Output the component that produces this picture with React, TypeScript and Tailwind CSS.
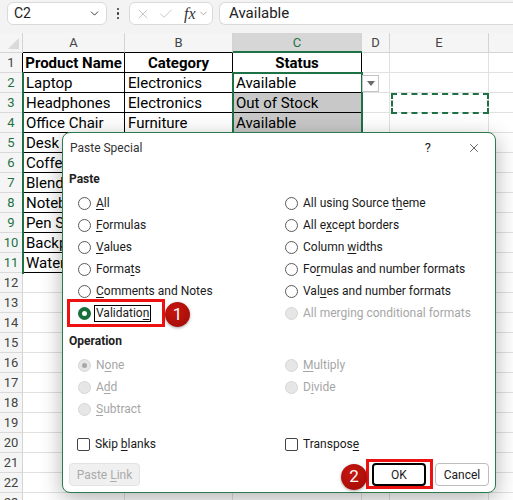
import { Check, ChevronDown, X } from "lucide-react";

const GREEN = "#1e7145";

const LETTERS = ["A", "B", "C", "D", "E", "F"];
const COL_W = ["w-[102px]", "w-[108px]", "w-[129px]", "w-[28px]", "w-[99px]", "w-[60px]"];

const DATA: string[][] = [
  ["Product Name", "Category", "Status"],
  ["Laptop", "Electronics", "Available"],
  ["Headphones", "Electronics", "Out of Stock"],
  ["Office Chair", "Furniture", "Available"],
  ["Desk Lamp", "Furniture", "Available"],
  ["Coffee Maker", "Appliances", "Out of Stock"],
  ["Blender", "Appliances", "Available"],
  ["Notebook", "Stationery", "Available"],
  ["Pen Set", "Stationery", "Out of Stock"],
  ["Backpack", "Accessories", "Available"],
  ["Water Bottle", "Accessories", "Available"],
];

const ROWS = Array.from({ length: 23 }, (_, i) => i + 1);

function FormulaBar() {
  return (
    <div className="h-[33px] bg-[#f3f3f3] flex items-start pt-[2px] font-['Roboto',sans-serif]">
      <div className="ml-[7px] w-[100px] h-[23px] bg-white border border-[#dadada] rounded-[6px] flex items-center pl-[6px] pr-[5px] text-[14px] text-[#222]">
        <span>C2</span>
        <ChevronDown size={13} strokeWidth={1.75} className="ml-auto text-[#333]" />
      </div>
      <div className="w-[22px] h-[23px] flex flex-col items-center justify-center gap-[2px]">
        <span className="w-[2.5px] h-[2.5px] rounded-full bg-[#333]" />
        <span className="w-[2.5px] h-[2.5px] rounded-full bg-[#333]" />
        <span className="w-[2.5px] h-[2.5px] rounded-full bg-[#333]" />
      </div>
      <div className="w-[84px] h-[23px] bg-white border border-[#dadada] rounded-[6px] flex items-center pl-[5px] text-[#b4b4b4]">
        <X size={16} strokeWidth={1.1} />
        <Check size={16} strokeWidth={1.1} className="ml-[7px]" />
        <span className="ml-[10px] font-['Liberation_Serif',serif] italic text-[16px] text-[#333] leading-none">fx</span>
        <ChevronDown size={11} strokeWidth={1.5} className="ml-[2px] text-[#888]" />
      </div>
      <div className="ml-[6px] flex-1 h-[23px] bg-white border border-r-0 border-[#dadada] rounded-l-[6px] flex items-center pl-[9px] text-[15px] text-[#222]">
        Available
      </div>
    </div>
  );
}

function HeaderRow() {
  return (
    <div className="flex h-[20px] bg-[#f5f5f5] text-[13px] text-[#444]">
      <div className="w-[23px] shrink-0 border-r border-b border-[#d4d4d4] relative">
        <svg width="22" height="19" className="absolute left-0 top-0">
          <polygon points="19,5 19,16 8,16" fill="#dadada" />
        </svg>
      </div>
      {LETTERS.map((l, c) => (
        <div
          key={l}
          className={`${COL_W[c]} shrink-0 flex items-center justify-center pt-[1px] border-r border-[#d4d4d4] border-b ${
            c < 2 ? "border-b-black" : "border-b-[#d4d4d4]"
          } ${c === 2 ? "bg-[#d6d6d6] text-[#1e7145]" : ""}`}
        >
          {l}
        </div>
      ))}
    </div>
  );
}

function SheetRow({ r }: { r: number }) {
  const inTable = r <= 11;
  const selRow = r >= 2 && r <= 11;
  return (
    <div className="flex h-[20px]">
      <div
        className={`w-[23px] shrink-0 flex items-center justify-center pt-[1px] bg-[#f5f5f5] text-[13px] border-b border-b-[#d9d9d9] border-r ${
          inTable ? "border-r-black" : "border-r-[#d4d4d4]"
        } ${selRow ? "text-[#1e7145]" : "text-[#444]"}`}
      >
        {r}
      </div>
      {LETTERS.map((l, c) => {
        const table = inTable && c < 3;
        const text = table ? DATA[r - 1][c] : "";
        const grey = c === 2 && r >= 3 && r <= 11;
        return (
          <div
            key={l}
            className={`${COL_W[c]} shrink-0 flex items-center pt-[2px] px-[3px] overflow-hidden whitespace-nowrap text-[15px] text-black border-r border-b ${
              table ? "border-black" : "border-[#e1e1e1]"
            } ${grey ? "bg-[#c8c8c8]" : "bg-white"} ${r === 1 ? "font-bold justify-center" : ""}`}
          >
            {text}
          </div>
        );
      })}
    </div>
  );
}

function Key({ text }: { text: string }) {
  const i = text.indexOf("&");
  if (i < 0) return <span>{text}</span>;
  return (
    <span className="whitespace-pre">
      {text.slice(0, i)}
      <span className="underline underline-offset-[2px]">{text[i + 1]}</span>
      {text.slice(i + 2)}
    </span>
  );
}

type RadioState = "off" | "on" | "disabled" | "disabledOn";

function Radio({ label, state = "off", focus = false }: { label: string; state?: RadioState; focus?: boolean }) {
  const dis = state === "disabled" || state === "disabledOn";
  return (
    <div className={`h-[22px] flex items-center ${dis ? "text-[#a6a6a6]" : "text-[#1a1a1a]"}`}>
      {state === "on" ? (
        <span className="w-[13px] h-[13px] shrink-0 rounded-full border-[4px] border-[#17703c] bg-white" />
      ) : dis ? (
        <span className="w-[13px] h-[13px] shrink-0 rounded-full border border-[#d6d6d6] bg-[#e6e6e6] flex items-center justify-center">
          {state === "disabledOn" && <span className="w-[5px] h-[5px] rounded-full bg-[#a8a8a8]" />}
        </span>
      ) : (
        <span className="w-[13px] h-[13px] shrink-0 rounded-full border border-[#5a5a5a] bg-white" />
      )}
      <span className={`leading-[15px] ${focus ? "ml-[3px] border border-black px-[1px]" : "ml-[5px]"}`}>
        <Key text={label} />
      </span>
    </div>
  );
}

function CheckBox({ label }: { label: string }) {
  return (
    <div className="h-[22px] flex items-center text-[#1a1a1a]">
      <span className="w-[13px] h-[13px] shrink-0 rounded-[2px] border border-[#444] bg-white" />
      <span className="ml-[5px]">
        <Key text={label} />
      </span>
    </div>
  );
}

function PasteSpecialDialog() {
  return (
    <div className="absolute left-[62px] top-[132px] w-[434px] h-[361px] rounded-[8px] border border-[#2a7a4b] bg-white shadow-[0_6px_22px_rgba(0,0,0,0.3)] flex flex-col font-['Roboto',sans-serif] text-[12px]">
      <div className="h-[30px] shrink-0 flex items-center pl-[7px] pr-[14px]">
        <span className="text-[#333]">Paste Special</span>
        <span className="ml-auto mr-[36px] text-[13px] text-[#222]">?</span>
        <X size={14} strokeWidth={1.2} className="text-[#222]" />
      </div>

      <div className="mt-[8px] pl-[6px] font-bold text-[#222] leading-[16px]">Paste</div>
      <div className="mt-[5px] pl-[15px] grid grid-cols-[207px_1fr]">
        <div className="flex flex-col">
          <Radio label="&All" />
          <Radio label="&Formulas" />
          <Radio label="&Values" />
          <Radio label="Forma&ts" />
          <Radio label="&Comments and Notes" />
          <Radio label="Validatio&n" state="on" focus />
        </div>
        <div className="flex flex-col">
          <Radio label="All using Source t&heme" />
          <Radio label="All e&xcept borders" />
          <Radio label="Column &widths" />
          <Radio label="Fo&rmulas and number formats" />
          <Radio label="Val&ues and number formats" />
          <Radio label="All merging conditional formats" state="disabled" />
        </div>
      </div>

      <div className="mt-[9px] pl-[6px] font-bold text-[#222] leading-[16px]">Operation</div>
      <div className="mt-[5px] pl-[15px] grid grid-cols-[207px_1fr]">
        <div className="flex flex-col">
          <Radio label="N&one" state="disabledOn" />
          <Radio label="A&dd" state="disabled" />
          <Radio label="&Subtract" state="disabled" />
        </div>
        <div className="flex flex-col">
          <Radio label="&Multiply" state="disabled" />
          <Radio label="D&ivide" state="disabled" />
        </div>
      </div>

      <div className="mt-[13px] pl-[14px] grid grid-cols-[208px_1fr]">
        <CheckBox label="Skip &blanks" />
        <CheckBox label="Transpos&e" />
      </div>

      <div className="mt-[8px] px-[6px] flex items-center">
        <div className="w-[71px] h-[23px] rounded-[4px] bg-[#f0f0f0] border border-[#e3e3e3] text-[#aaa] flex items-center justify-center">
          <Key text="Paste &Link" />
        </div>
        <div className="ml-auto w-[54px] h-[23px] rounded-[4px] border-2 border-black text-[#1a1a1a] flex items-center justify-center">
          OK
        </div>
        <div className="ml-[9px] w-[54px] h-[23px] rounded-[4px] border border-[#bdbdbd] text-[#1a1a1a] flex items-center justify-center">
          Cancel
        </div>
      </div>
    </div>
  );
}

function Badge({ n, className }: { n: string; className: string }) {
  return (
    <div
      className={`absolute rounded-full bg-[radial-gradient(circle_at_40%_35%,#c8160f,#9c0a06)] text-white flex items-center justify-center font-['Roboto',sans-serif] text-[17px] shadow-[0_1px_3px_rgba(0,0,0,0.35)] ${className}`}
    >
      {n}
    </div>
  );
}

export default function App() {
  return (
    <div className="relative w-[513px] h-[500px] overflow-hidden bg-white font-['Roboto',sans-serif]">
      <FormulaBar />
      <div className="w-[600px]">
        <HeaderRow />
        {ROWS.map((r) => (
          <SheetRow key={r} r={r} />
        ))}
      </div>

      {/* selection outlines */}
      <div className="absolute left-[233px] top-[51px] w-[129px] h-[2px]" style={{ background: GREEN }} />
      <div className="absolute left-[232px] top-[72px] w-[131px] h-[202px] border-2 border-[#1e7145]" />
      <div className="absolute left-[22px] top-[72px] w-[2px] h-[202px] bg-[#1e7145]" />

      {/* validation dropdown arrow */}
      <div className="absolute left-[362px] top-[75px] w-[17px] h-[17px] bg-white border border-[#c4c4c4] flex items-center justify-center">
        <svg width="8" height="5">
          <polygon points="0,0 8,0 4,5" fill="#6b6b6b" />
        </svg>
      </div>

      {/* copy marquee */}
      <div className="absolute left-[391px] top-[93px] w-[98px] h-[21px] border-2 border-dashed border-[#1e7145]" />

      <PasteSpecialDialog />

      <div className="absolute left-[67px] top-[299px] w-[98px] h-[28px] border-[3px] border-[#ee1111]" />
      <Badge n="1" className="left-[165px] top-[302px] w-[25px] h-[25px]" />

      <div className="absolute left-[366px] top-[459px] w-[67px] h-[30px] border-[3px] border-[#ee1111]" />
      <Badge n="2" className="left-[341px] top-[464px] w-[26px] h-[26px]" />
    </div>
  );
}
